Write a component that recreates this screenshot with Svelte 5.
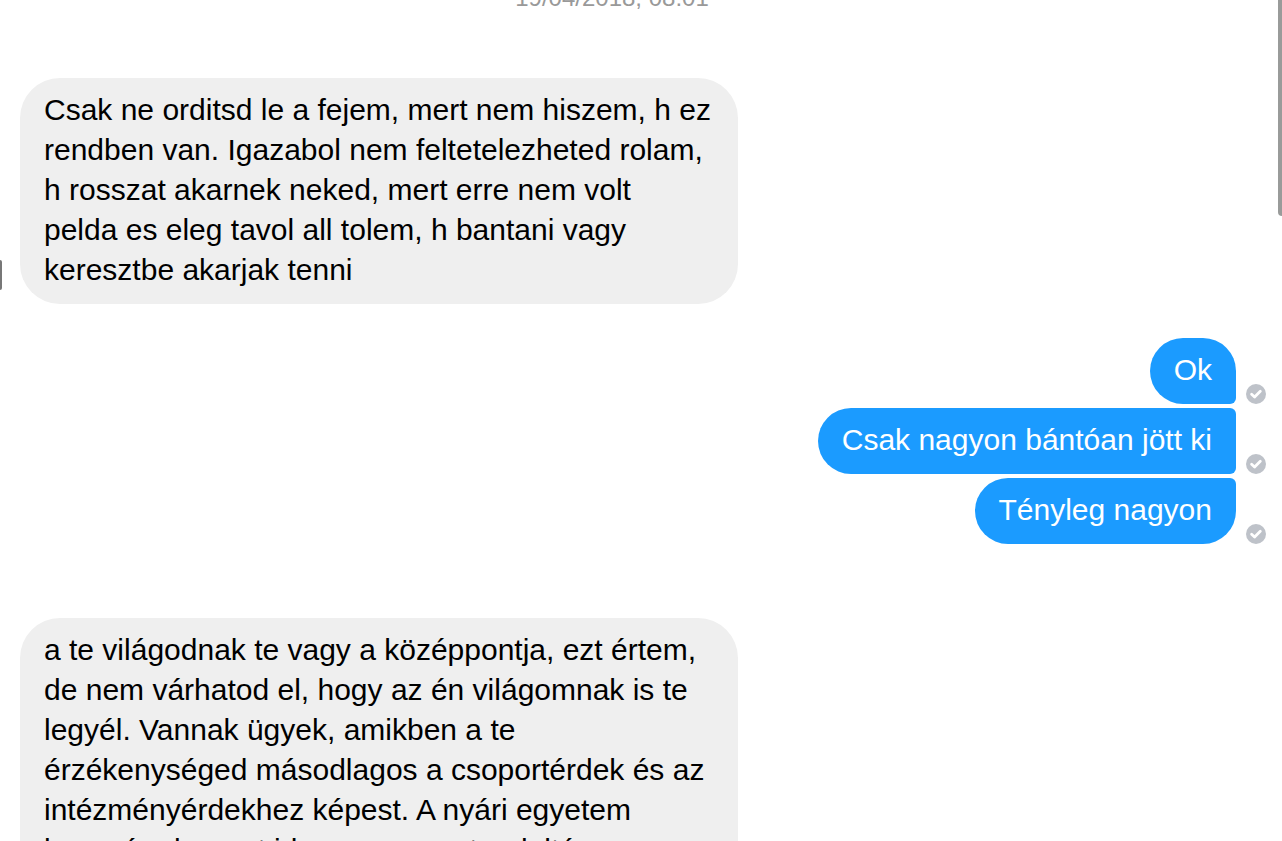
<script>
  const timestamp = "19/04/2018, 08:01";

  const groups = [
    {
      from: "them",
      avatar: true,
      messages: [
        [
          "Csak ne orditsd le a fejem, mert nem hiszem, h ez",
          "rendben van. Igazabol nem feltetelezheted rolam,",
          "h rosszat akarnek neked, mert erre nem volt",
          "pelda es eleg tavol all tolem, h bantani vagy",
          "keresztbe akarjak tenni",
        ],
      ],
    },
    {
      from: "me",
      messages: [["Ok"], ["Csak nagyon bántóan jött ki"], ["Tényleg nagyon"]],
    },
    {
      from: "them",
      avatar: false,
      messages: [
        [
          "a te világodnak te vagy a középpontja, ezt értem,",
          "de nem várhatod el, hogy az én világomnak is te",
          "legyél. Vannak ügyek, amikben a te",
          "érzékenységed másodlagos a csoportérdek és az",
          "intézményérdekhez képest. A nyári egyetem",
          "kapcsán de mert idegesen egyet a deltán",
        ],
      ],
    },
  ];
</script>

<main>
  <time>{timestamp}</time>

  {#each groups as group}
    <section class={group.from}>
      {#if group.from === "them"}
        <span class="avatar" class:visible={group.avatar}></span>
      {/if}
      <div class="messages">
        {#each group.messages as lines}
          <div class="row">
            <p>{lines.join("\n")}</p>
            {#if group.from === "me"}
              <svg viewBox="0 0 20 20" role="img" aria-label="Sent">
                <circle cx="10" cy="10" r="10" />
                <path d="M5.6 10.2 8.6 13.1 14.3 7.3" />
              </svg>
            {/if}
          </div>
        {/each}
      </div>
    </section>
  {/each}

  <div class="scrollbar"></div>
</main>

<style>
  :global(body) {
    background: #fff;
  }

  main {
    position: relative;
    box-sizing: border-box;
    height: 100vh;
    overflow: hidden;
    color: #000;
    font-family: "Helvetica Neue", "Liberation Sans", Arial, sans-serif;
    font-size: 30px;
    line-height: 40px;
  }

  time {
    display: block;
    margin-top: -16px;
    padding-right: 58px;
    color: #999;
    font-size: 24px;
    line-height: 28px;
    text-align: center;
  }

  section {
    display: flex;
    align-items: flex-end;
  }

  .them {
    margin: 66px 0 34px;
  }

  .me {
    justify-content: flex-end;
    margin-bottom: 74px;
    padding-right: 16px;
  }

  .me + .them {
    margin-top: 0;
  }

  .avatar {
    width: 2px;
    height: 30px;
    margin: 0 18px 14px 0;
    border-radius: 0 4px 4px 0;
  }

  .avatar.visible {
    background: #777;
  }

  .messages {
    display: flex;
    flex-direction: column;
    gap: 4px;
  }

  .row {
    display: flex;
    align-items: flex-end;
    justify-content: flex-end;
    gap: 10px;
  }

  p {
    margin: 0;
    padding: 12px 24px 14px;
    white-space: pre;
  }

  .them p {
    box-sizing: border-box;
    width: 56vw;
    border-radius: 40px;
    background: #efefef;
  }

  .me p {
    border-radius: 33px 6px 6px 33px;
    background: #1b9bff;
    color: #fff;
  }

  .me .row:first-child p {
    border-top-right-radius: 33px;
  }

  .me .row:last-child p {
    border-bottom-right-radius: 33px;
  }

  svg {
    width: 20px;
    height: 20px;
  }

  circle {
    fill: #bec2c9;
  }

  path {
    fill: none;
    stroke: #fff;
    stroke-width: 2.8;
    stroke-linecap: round;
    stroke-linejoin: round;
  }

  .scrollbar {
    position: absolute;
    top: 0;
    right: 0;
    width: 4px;
    height: 216px;
    border-bottom-left-radius: 4px;
    background: #999b9a;
  }
</style>
